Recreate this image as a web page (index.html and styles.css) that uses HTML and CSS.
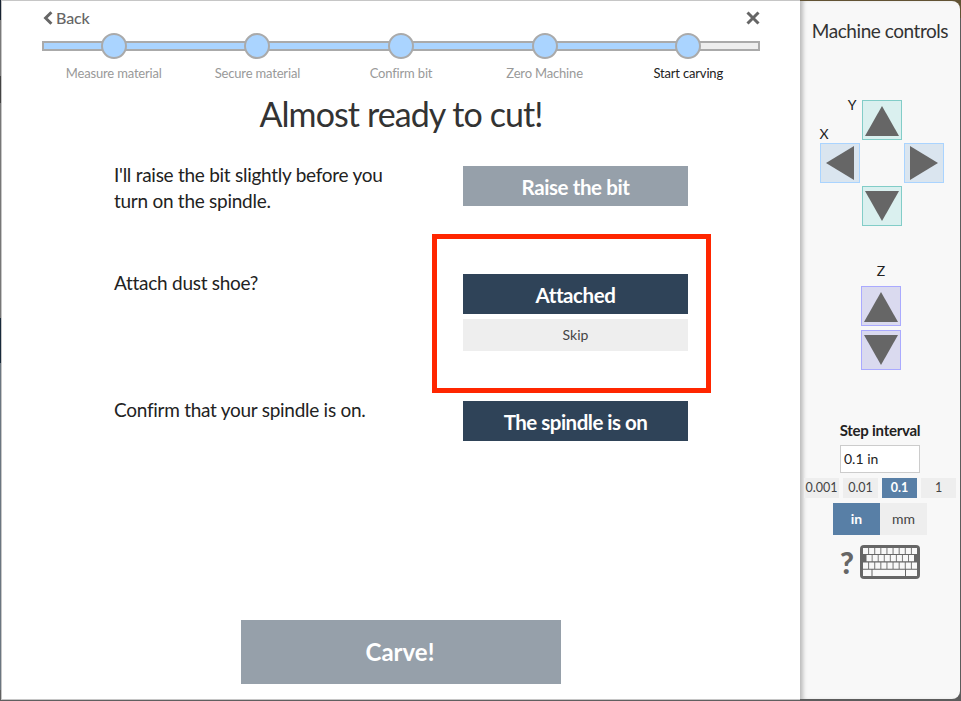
FILE: index.html
```html
<!DOCTYPE html>
<html lang="en">
<head>
<meta charset="utf-8">
<title>Carve</title>
<link rel="stylesheet" href="styles.css">
</head>
<body>
<div class="app">
  <main class="dialog">
    <header class="topbar">
      <a class="back"><svg class="chevron" width="10" height="14" viewBox="0 0 10 14"><path d="M8.4 1.2 2.6 7l5.8 5.8" /></svg>Back</a>
      <a class="close"><svg width="14" height="14" viewBox="0 0 14 14"><path d="M1.5 1.5l11 11M12.5 1.5l-11 11" /></svg></a>
    </header>
    <ol class="steps">
      <li><i></i><span>Measure material</span></li>
      <li><i></i><span>Secure material</span></li>
      <li><i></i><span>Confirm bit</span></li>
      <li><i></i><span>Zero Machine</span></li>
      <li class="current"><i></i><span>Start carving</span></li>
    </ol>
    <h1>Almost ready to cut!</h1>
    <section class="tasks">
      <div class="task raise"><p>I'll raise the bit slightly before you turn on the spindle.</p><button class="btn disabled">Raise the bit</button></div>
      <div class="task shoe"><p>Attach dust shoe?</p><div class="choices"><button class="btn">Attached</button><button class="skip">Skip</button></div></div>
      <div class="task"><p>Confirm that your spindle is on.</p><button class="btn spindle">The spindle is on</button></div>
      <div class="highlight"></div>
    </section>
    <button class="carve">Carve!</button>
  </main>
  <aside class="controls">
    <h2>Machine controls</h2>
    <div class="pad">
      <span class="axis y-label">Y</span>
      <button class="jog y up"><svg width="34" height="30" viewBox="0 0 34 30"><path d="M17 0 34 30H0Z"/></svg></button>
      <span class="axis x-label">X</span>
      <button class="jog x left"><svg width="28" height="34" viewBox="0 0 28 34"><path d="M0 17 28 0V34Z"/></svg></button>
      <button class="jog x right"><svg width="28" height="34" viewBox="0 0 28 34"><path d="M28 17 0 0V34Z"/></svg></button>
      <button class="jog y down"><svg width="34" height="30" viewBox="0 0 34 30"><path d="M17 30 34 0H0Z"/></svg></button>
    </div>
    <div class="zpad">
      <span class="axis">Z</span>
      <button class="jog z up"><svg width="34" height="30" viewBox="0 0 34 30"><path d="M17 0 34 30H0Z"/></svg></button>
      <button class="jog z down"><svg width="34" height="30" viewBox="0 0 34 30"><path d="M17 30 34 0H0Z"/></svg></button>
    </div>
    <h3>Step interval</h3>
    <div class="field">0.1 in</div>
    <div class="sizes"><span>0.001</span><span>0.01</span><span class="on">0.1</span><span>1</span></div>
    <div class="units"><span class="on">in</span><span>mm</span></div>
    <div class="help">
      <b>?</b>
      <svg width="60" height="34" viewBox="0 0 60 34">
        <rect width="60" height="34" rx="4" fill="#666"/>
        <g fill="none" stroke="#f8f8f8" stroke-width="6.2">
          <path d="M3 6H57" stroke-dasharray="5.2 .9"/>
          <path d="M6.5 13.2H54" stroke-dasharray="5.2 .85"/>
          <path d="M3 20.6H57" stroke-dasharray="5.2 .9"/>
          <path d="M3 27.9H11.5M12.5 27.9H45M46 27.9H57"/>
        </g>
      </svg>
    </div>
  </aside>
</div>
</body>
</html>
```

FILE: styles.css
```css
* { box-sizing: border-box; }
body { margin: 0; font-family: Lato, "Liberation Sans", sans-serif; color: #222; font-variant-ligatures: none; }
h1, h2, h3, p, ol { margin: 0; padding: 0; font-weight: 400; }
button { border: 0; padding: 0; font-family: inherit; border-radius: 0; font-variant-ligatures: none; }
svg { display: block; }
.app {
  width: 961px; height: 701px; padding: 0 1px 0 1px; display: flex; overflow: hidden;
  background: linear-gradient(#625334 0 18px, #5c5c5c 18px) right / 161px 100% no-repeat,
    linear-gradient(#172332 0 20px, #797979 20px 76px, #434343 76px 103px, #777 103px 318px, #17293b 318px 363px, #6b7680 363px 690px, #606060 690px);
}
.dialog {
  width: 799px; height: 700px; flex: none; background: #fff;
  border: 1px solid #c6c6c6; border-right: 0;
  display: flex; flex-direction: column; align-items: flex-start;
}
.topbar { width: 718px; height: 32px; margin-left: 40px; display: flex; justify-content: space-between; color: #666; }
.back { display: flex; align-items: flex-start; font-size: 16px; font-weight: 500; letter-spacing: -.1px; line-height: 18px; padding-top: 8px; gap: 3px; margin-left: 1px; }
.chevron { margin-top: 2px; }
.topbar path { fill: none; stroke: #666; stroke-width: 3; }
.close { padding: 10px 0 0 0; }
.steps {
  list-style: none; width: 718px; margin-left: 40px; height: 52px; display: grid; grid-template-columns: repeat(5, 1fr);
  background: linear-gradient(#aaa, #aaa) 0 8px / 2px 10px no-repeat,
    linear-gradient(#aaa, #aaa) 100% 8px / 2px 10px no-repeat,
    linear-gradient(#aaa 0 2px, transparent 2px 8px, #aaa 8px) 0 8px / 100% 10px no-repeat,
    linear-gradient(90deg, #aad4ff 90%, #eee 90%) 0 8px / 100% 10px no-repeat;
}
.steps li { display: flex; flex-direction: column; align-items: center; font-size: 13px; line-height: 16px; color: #999; letter-spacing: -.17px; }
.steps i { width: 26px; height: 26px; border: 2px solid #aaa; border-radius: 50%; background: #aad4ff; margin-bottom: 6px; }
.steps .current { color: #222; }
h1 { width: 798px; text-align: center; font-size: 34px; letter-spacing: -.92px; line-height: 40px; margin-top: 9px; color: #333; }
.tasks { position: relative; width: 574px; margin: 32px 0 0 112px; }
.task { display: flex; justify-content: space-between; align-items: flex-start; }
.task p { width: 300px; font-size: 19px; letter-spacing: -.27px; line-height: 26px; margin-top: -4px; }
.raise { height: 108px; }
.shoe { height: 127px; }
.btn { display: block; width: 225px; height: 40px; background: #2f4358; color: #fff; font-size: 20.5px; font-weight: 700; padding-top: 2px; letter-spacing: -.4px; }
.spindle { letter-spacing: -.5px; }
.disabled { background: #96a0aa; }
.skip { display: block; width: 225px; height: 32px; margin-top: 5px; padding-bottom: 1px; background: #eee; color: #444; font-size: 14px; }
.highlight { position: absolute; left: 318px; top: 68px; width: 279px; height: 159px; border: 5px solid #ff2600; }
.carve { width: 320px; height: 64px; margin: 179px 0 0 239px; padding: 0 2px 1px 0; background: #96a0aa; color: #fff; font-size: 24px; font-weight: 700; }
.controls {
  width: 160px; height: 698px; margin-top: 1px; flex: none; background: #f8f8f8; border-radius: 0 8px 8px 0;
  box-shadow: inset 5px 0 4px -2px #bbb; display: flex; flex-direction: column; align-items: center;
}
h2 { font-size: 19px; letter-spacing: -.45px; line-height: 24px; margin-top: 18px; color: #333; white-space: nowrap; }
.pad {
  margin: 57px 0 0 3px; display: grid; grid-template: 40px 40px 40px / 40px 40px 40px; gap: 3px 2px;
}
.axis { font-size: 14px; line-height: 16px; color: #222; }
.y-label { grid-area: 1 / 1; justify-self: end; margin: -3px 3px 0 0; }
.x-label { grid-area: 1 / 1; align-self: end; margin-bottom: -2px; }
.jog { width: 40px; height: 40px; border: 1px solid; display: flex; align-items: center; justify-content: center; }
.jog svg { fill: #666; }
.jog.up svg { margin-top: 1px; }
.jog.down svg { margin-bottom: 1px; }
.y { border-color: #82cdc8; background: #daf0ef; }
.x { border-color: #aad4ff; background: #dae5ef; }
.z { border-color: #aaaaff; background: #dadaef; }
.pad .up { grid-area: 1 / 2; }
.pad .left { grid-area: 2 / 1; }
.pad .right { grid-area: 2 / 3; }
.pad .down { grid-area: 3 / 2; }
.zpad { display: flex; flex-direction: column; align-items: center; margin: 37px 0 0 2px; gap: 4px; }
.zpad .axis { margin-bottom: 3px; }
h3 { font-size: 15px; font-weight: 700; letter-spacing: -.25px; line-height: 18px; margin-top: 51px; }
.field { width: 80px; height: 28px; margin-top: 6px; border: 1px solid #ccc; background: #fff; font-size: 14px; line-height: 26px; padding-left: 3px; }
.sizes { display: flex; gap: 4px; margin-top: 5px; }
.sizes span { width: 35px; height: 20px; background: #eee; font-size: 12.5px; line-height: 20px; text-align: center; color: #444; }
.units { display: flex; margin-top: 5px; }
.units span { width: 47px; height: 32px; background: #eee; font-size: 14px; line-height: 32px; text-align: center; color: #444; }
.controls .on { background: #587fa6; color: #fff; font-weight: 700; }
.help { display: flex; margin-top: 10px; gap: 6px; align-items: center; }
.help b { font-size: 30px; line-height: 34px; color: #666; font-weight: 900; }
```
